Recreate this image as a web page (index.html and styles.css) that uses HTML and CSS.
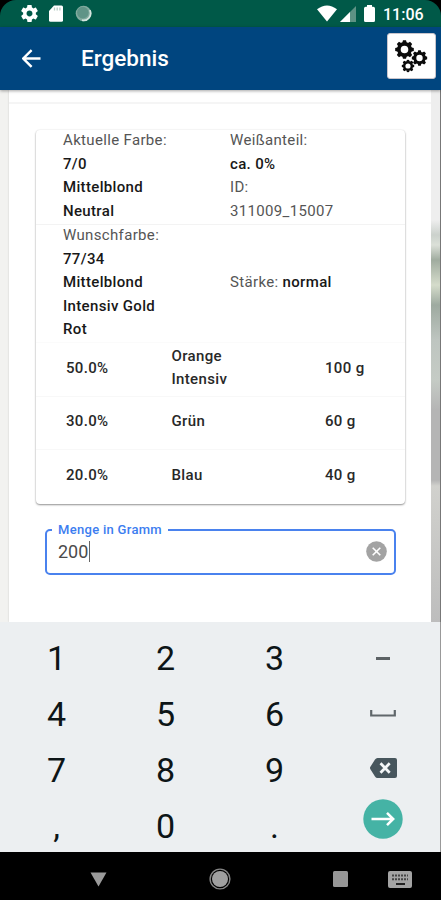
FILE: index.html
```html
<!DOCTYPE html>
<html lang="de">
<head>
<meta charset="utf-8">
<title>Ergebnis</title>
<link rel="stylesheet" href="styles.css">
</head>
<body>
<svg class="defs" width="0" height="0" aria-hidden="true">
  <symbol id="gear" viewBox="2 2 20 20"><path fill-rule="evenodd" d="M19.43 12.98c.04-.32.07-.64.07-.98s-.03-.66-.07-.98l2.11-1.65c.19-.15.24-.42.12-.64l-2-3.46c-.12-.22-.39-.3-.61-.22l-2.49 1c-.52-.4-1.08-.73-1.69-.98l-.38-2.65C14.46 2.18 14.25 2 14 2h-4c-.25 0-.46.18-.49.42l-.38 2.65c-.61.25-1.17.59-1.69.98l-2.49-1c-.23-.09-.49 0-.61.22l-2 3.46c-.13.22-.07.49.12.64l2.11 1.65c-.04.32-.07.65-.07.98s.03.66.07.98l-2.11 1.65c-.19.15-.24.42-.12.64l2 3.46c.12.22.39.3.61.22l2.49-1c.52.4 1.08.73 1.69.98l.38 2.65c.03.24.24.42.49.42h4c.25 0 .46-.18.49-.42l.38-2.65c.61-.25 1.17-.59 1.69-.98l2.49 1c.23.09.49 0 .61-.22l2-3.46c.12-.22.07-.49-.12-.64l-2.11-1.65zM12 15.500c-1.93 0-3.500-1.57-3.500-3.500s1.57-3.500 3.500-3.500 3.500 1.57 3.500 3.500-1.57 3.500-3.500 3.500z"/></symbol>
  <symbol id="cog" viewBox="-10 -10 20 20">
    <circle r="5.900" fill="none" stroke="currentColor" stroke-width="3.800"/>
    <g fill="currentColor">
      <path id="teeth" d="M-1.600-9.800h3.200l.8 3h-4.800zM-1.600 9.800h3.200l.8-3h-4.800zM-9.800-1.600v3.200l3 .8v-4.800zM9.800-1.600v3.200l-3 .8v-4.800z"/>
      <use href="#teeth" transform="rotate(45)"/>
    </g>
  </symbol>
</svg>
<div class="screen">
  <header class="status">
    <svg class="st-gear" width="17" height="17"><use href="#gear" fill="#fff"/></svg>
    <svg class="st-sd" width="14" height="17" viewBox="0 0 14 17"><path d="M5 .5h7.500Q14 .5 14 2v13.300q0 1.500-1.500 1.500h-11Q0 16.800 0 15.300V6z" fill="#fff"/><path d="M5.500 2.500v3M8.200 2.500v3M10.900 2.500v3" stroke="#b9cdc6" stroke-width="1.300"/></svg>
    <svg class="st-sync" width="17" height="17" viewBox="0 0 17 17"><circle cx="8.500" cy="8.500" r="7.800" fill="#82ab9f"/><circle cx="7.800" cy="7.600" r="5.800" fill="#609487"/><path d="M14.800 5.200A7 7 0 0 1 7 15.200" fill="none" stroke="#d5e5df" stroke-width="1.800"/></svg>
    <span class="spacer"></span>
    <svg class="st-wifi" width="20" height="17" viewBox="0 0 20 17"><path d="M0 4.200Q10-3.400 20 4.200L10 16.500z" fill="#fff"/></svg>
    <svg class="st-cell" width="16" height="16" viewBox="0 0 16 16"><path d="M16 0v16H0z" fill="#5d9284"/><path d="M10 6v10H0z" fill="#fff"/></svg>
    <svg class="st-batt" width="11" height="17" viewBox="0 0 11 17"><path d="M3 0h5v1.800h1.300q1.700 0 1.700 1.700v12q0 1.500-1.500 1.500h-8Q0 17 0 15.500v-12Q0 1.800 1.700 1.800H3z" fill="#fff"/></svg>
    <span class="clock">11:06</span>
  </header>
  <nav class="appbar">
    <svg class="back" width="19" height="19" viewBox="0 0 19 19"><path d="M18.500 9.500H2M9.600 1.200L1.300 9.500l8.300 8.300" fill="none" stroke="#fff" stroke-width="2.400"/></svg>
    <h1 class="title">Ergebnis</h1>
    <span class="settings">
      <svg width="33" height="33" viewBox="0 0 33 33" color="#0b0b0b"><use href="#cog" x="0" y="0" width="19" height="19"/><use href="#cog" x="16.500" y="10" width="16" height="16"/><use href="#cog" x="6.500" y="19.500" width="13" height="13"/></svg>
    </span>
  </nav>
  <main class="content">
    <section class="panel">
      <div class="card">
        <div class="info">
          <div>Aktuelle Farbe:<br><b>7/0<br>Mittelblond<br>Neutral</b></div>
          <div>Weißanteil:<br><b>ca. 0%</b><br>ID:<br>311009_15007</div>
        </div>
        <div class="info wish">
          <div>Wunschfarbe:<br><b>77/34<br>Mittelblond<br>Intensiv Gold<br>Rot</b></div>
          <div>Stärke: <b>normal</b></div>
        </div>
        <div class="mix"><span>50.0%</span><span>Orange<br>Intensiv</span><span>100 g</span></div>
        <div class="mix"><span>30.0%</span><span>Grün</span><span>60 g</span></div>
        <div class="mix"><span>20.0%</span><span>Blau</span><span>40 g</span></div>
      </div>
      <fieldset class="field">
        <legend>Menge in Gramm</legend>
        <div class="entry">
          <span class="value">200</span><i class="caret"></i>
          <svg class="clear" width="21" height="21" viewBox="0 0 21 21"><circle cx="10.500" cy="10.500" r="10.300" fill="#a3a3a3"/><path d="M6.700 6.700l7.600 7.600M14.300 6.700l-7.600 7.600" stroke="#fff" stroke-width="1.600"/></svg>
        </div>
      </fieldset>
    </section>
    <aside class="backdrop"></aside>
  </main>
  <section class="keys">
    <span>1</span><span>2</span><span>3</span>
    <span><svg width="14" height="3"><rect width="14" height="3" fill="#5c6265"/></svg></span>
    <span>4</span><span>5</span><span>6</span>
    <span><svg class="space" width="26" height="7" viewBox="0 0 26 7"><path d="M1.200 0v5.500h23.600V0" fill="none" stroke="#60676b" stroke-width="2.200"/></svg></span>
    <span>7</span><span>8</span><span>9</span>
    <span><svg class="del" width="27" height="20" viewBox="0 0 27 20"><path d="M7.500 0H25q2 0 2 2v16q0 2-2 2H7.500Q6 20 5 18.500L.4 11.200q-.8-1.200 0-2.400L5 1.500Q6 0 7.500 0z" fill="#47565d"/><path d="M10.500 5.200l9.200 9.600M19.700 5.200L10.500 14.800" stroke="#f4f7f8" stroke-width="2.700"/></svg></span>
    <span>,</span><span>0</span><span>.</span>
    <span><svg class="go" width="40" height="40" viewBox="0 0 40 40"><circle cx="20" cy="20" r="19.700" fill="#45b3a5"/><path d="M8.500 20h21M24 13.800l6.200 6.200-6.200 6.200" fill="none" stroke="#fff" stroke-width="2.500"/></svg></span>
  </section>
  <footer class="navbar">
    <svg class="n-back" width="17" height="15" viewBox="0 0 17 15"><path d="M.5.500h16L8.500 14.500z" fill="#9b9b9b"/></svg>
    <svg class="n-home" width="22" height="22" viewBox="0 0 22 22"><circle cx="11" cy="11" r="9.900" fill="none" stroke="#858585" stroke-width="1.400"/><circle cx="11" cy="11" r="8" fill="#a0a0a0"/></svg>
    <svg class="n-recent" width="15" height="16"><rect width="15" height="16" rx="1.500" fill="#979797"/></svg>
    <svg class="n-kb" width="24" height="17" viewBox="0 0 24 17"><rect width="24" height="17" rx="2" fill="#a3a3a3"/><path d="M4 4.500h16M4 8.300h16" stroke="#444" stroke-width="2" stroke-dasharray="2 1"/><path d="M8 13h9" stroke="#222" stroke-width="2"/></svg>
  </footer>
</div>
</body>
</html>
```

FILE: styles.css
```css
* { box-sizing: border-box; }
body { margin: 0; background: #000; font-family: Roboto, "Liberation Sans", sans-serif; }
svg { display: block; flex: none; }
.defs { position: absolute; }
.screen { width: 441px; height: 900px; display: flex; flex-direction: column; overflow: hidden; }

.status { height: 27px; flex: none; display: flex; align-items: center; padding: 0 19px 0 21px; background: #005948; border-radius: 16px 16px 0 0; }
.st-sd { margin-left: 11px; }
.st-sync { margin-left: 12px; }
.spacer { flex: 1; }
.st-wifi { margin-right: 3px; }
.st-batt { margin: 0 8px; }
.clock { width: 39px; color: #fff; font-size: 16px; font-weight: 500; line-height: 27px; white-space: nowrap; padding-top: 1px; }

.appbar { height: 63px; flex: none; display: flex; align-items: center; background: #00457f; padding: 0 5px 0 22px; position: relative; box-shadow: 0 1px 3px rgba(0,0,0,.35); }
.title { flex: 1; margin: 0 0 2px 40px; color: #fff; font-size: 22.500px; font-weight: 500; line-height: 30px; }
.settings { width: 49px; height: 46px; margin-bottom: 5px; display: grid; place-items: center; background: #fff; border: 1px solid #c9c5cc; border-radius: 3px; }

.content { height: 532px; flex: none; display: flex; background: #f2f2f0; padding-left: 9px; }
.panel { width: 422px; padding: 12px 26px 0 27px; background: #fff; box-shadow: 0 0 2px rgba(0,0,0,.15); }
.panel::before { content: ""; display: block; height: 2px; margin: 0 -26px 26px -27px; background: #f5f5f5; }
.backdrop { width: 10px; border-right: 1px solid #777; background: linear-gradient(#eee 0 130px, #cbd1cc 145px, #dbe0d8 155px, #a0ac9f 170px, #d5dccb 195px, #9eaaa0 215px, #bec5c0 250px, #c5cbc5 290px, #b5b5b5 320px 390px, #d1d1cd 396px, #bdbdbd); }

.card { height: 374px; border-radius: 4px; background: #fff; box-shadow: 0 1px 2px rgba(0,0,0,.42), 0 0 2px rgba(0,0,0,.08); font-size: 15px; line-height: 23.600px; letter-spacing: .34px; color: #555; }
.info { height: 95px; display: grid; grid-template-columns: 167px 1fr; align-items: center; padding: 0 0 1px 27px; border-bottom: 1px solid #f3f3f3; }
.info > div { margin-top: -1px; }
.info.wish { height: 118px; border-bottom-color: #fbfbfb; }
.info b { font-weight: 500; color: #181818; }
.mix { height: 53.600px; display: grid; grid-template-columns: 105.500px 153.500px 1fr; align-items: center; padding: 0 0 2px 30px; font-weight: 500; color: #282828; border-bottom: 1px solid #f8f8f8; }
.mix:last-child { border-bottom: 0; }

.field { width: 351px; height: 53px; margin: 18px 0 0 9px; padding: 0 7px 0 12px; border: 2px solid #4a82ee; border-radius: 5px; min-width: 0; }
.field legend { margin-left: -7px; padding: 0 6px; height: 15px; font-size: 13px; line-height: 15px; font-weight: 500; letter-spacing: .3px; color: #3c7df0; }
.entry { height: 29px; display: flex; align-items: center; font-size: 18px; color: #4b4b4b; }
.value { margin-left: -1px; }
.caret { width: 1px; height: 21px; margin-left: 1px; background: #666; }
.clear { margin-left: auto; }

.keys { height: 230px; flex: none; display: grid; grid-template-columns: repeat(4, 109px); grid-auto-rows: 56px; padding: 8px 0 0 2px; background: #eceff1; color: #0d1517; font-size: 34px; line-height: 56px; border-right: 1px solid #999; }
.keys span { display: grid; place-items: center; }
.keys svg { margin-right: 2px; }
.keys .go { margin-bottom: 15px; }
.keys .del { margin: -4px 0 0; }
.keys .space { margin-top: -2px; }

.navbar { height: 48px; flex: none; display: flex; align-items: center; padding: 6px 0 0 90px; background: #000; }
.n-home { margin-left: 102px; }
.n-recent { margin-left: 102px; }
.n-kb { margin-left: 40px; }
```
